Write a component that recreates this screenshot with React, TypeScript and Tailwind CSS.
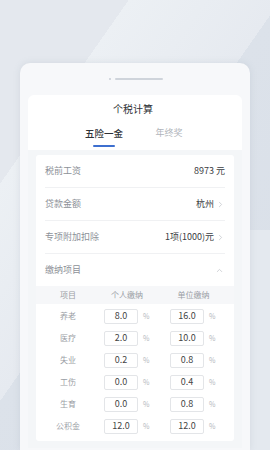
import { ChevronRight, ChevronUp } from "lucide-react";

const rows = [
  { name: "养老", personal: "8.0", company: "16.0" },
  { name: "医疗", personal: "2.0", company: "10.0" },
  { name: "失业", personal: "0.2", company: "0.8" },
  { name: "工伤", personal: "0.0", company: "0.4" },
  { name: "生育", personal: "0.0", company: "0.8" },
  { name: "公积金", personal: "12.0", company: "12.0" },
];

const RateBox = ({ value }: { value: string }) => (
  <div className="flex items-center gap-[5px]">
    <div className="flex h-[15px] w-[34px] items-center justify-center rounded-[2px] border border-[#e3e5e8] bg-white text-[9px] text-[#444]">
      {value}
    </div>
    <span className="text-[7px] text-[#b5b8bd]">%</span>
  </div>
);

export default function App() {
  return (
    <div
      className="relative h-[450px] w-[270px] overflow-hidden bg-[#dce2ea]"
      style={{ fontFamily: '"Noto Sans CJK SC", "Noto Sans", sans-serif' }}
    >
      {/* background light wedge */}
      <div className="pointer-events-none absolute inset-0 bg-[linear-gradient(125deg,#e4e8ee_0%,#e4e8ee_22%,#ecf0f4_22%,#e6eaf0_48%,#dce2ea_48%,#d9dfe8_100%)]" />
      <div className="pointer-events-none absolute right-0 top-[230px] h-[220px] w-[20px] bg-[#e4e9ef]" />

      <div className="relative mx-[20px] mt-[63px] h-[387px] rounded-t-[10px] bg-[#f7f8fa] px-[8px] shadow-[0_0_6px_rgba(160,170,185,0.25)]">
        {/* handle */}
        <div className="flex h-[32px] items-center justify-center gap-[4px] pl-[2px]">
          <div className="h-[2px] w-[2px] rounded-full bg-[#c9ced6]" />
          <div className="h-[2px] w-[48px] rounded-full bg-[#cfd4db]" />
        </div>

        <div className="rounded-t-[6px] bg-white">
          {/* header */}
          <div className="flex h-[55px] flex-col">
            <div className="pt-[6px] pr-[4px] text-center text-[10px] leading-[16px] text-[#2f3237]">个税计算</div>
            <div className="mt-[9px] flex">
              <div className="ml-[48px] flex w-[56px] flex-col items-center">
                <span className="text-[9.5px] font-medium leading-[14px] text-[#2f3237]">五险一金</span>
                <div className="mt-[5px] h-[2px] w-[22px] rounded-full bg-[#3d6fcf]" />
              </div>
              <div className="ml-[23px] w-[28px] text-center text-[9px] leading-[14px] text-[#b0b4ba]">年终奖</div>
            </div>
          </div>

          {/* gray body */}
          <div className="bg-[#f4f6f8] px-[8px] pt-[5px] pb-[7px]">
            <div className="rounded-[3px] bg-white pb-[4px]">
              <div className="mx-[9px] flex h-[33px] items-center justify-between border-b border-[#f0f1f3]">
                <span className="text-[9px] text-[#8d9198]">税前工资</span>
                <span className="text-[9px] text-[#3a3d42]">8973 元</span>
              </div>
              <div className="mx-[9px] flex h-[33px] items-center justify-between border-b border-[#f0f1f3]">
                <span className="text-[9px] text-[#8d9198]">贷款金额</span>
                <span className="flex items-center gap-[2px] text-[9px] text-[#3a3d42]">
                  杭州
                  <ChevronRight size={9} className="text-[#c3c6cb]" />
                </span>
              </div>
              <div className="mx-[9px] flex h-[33px] items-center justify-between border-b border-[#f0f1f3]">
                <span className="text-[9px] text-[#8d9198]">专项附加扣除</span>
                <span className="flex items-center gap-[2px] text-[9px] text-[#3a3d42]">
                  1项(1000)元
                  <ChevronRight size={9} className="text-[#c3c6cb]" />
                </span>
              </div>
              <div className="mx-[9px] flex h-[32px] items-center justify-between">
                <span className="text-[9px] text-[#8d9198]">缴纳项目</span>
                <ChevronUp size={9} className="mr-[1px] text-[#c3c6cb]" />
              </div>

              {/* table */}
              <div className="flex h-[18px] items-center bg-[#f6f7f9] text-[8px] text-[#9a9ea5]">
                <div className="w-[58px] pl-[6px] text-center">项目</div>
                <div className="w-[66px] text-center">个人缴纳</div>
                <div className="w-[66px] pl-[1px] text-center">单位缴纳</div>
              </div>
              <div className="pt-[1px]">
                {rows.map((r) => (
                  <div key={r.name} className="flex h-[22px] items-center">
                    <div className="w-[58px] pl-[6px] text-center text-[8px] text-[#9a9ea5]">{r.name}</div>
                    <div className="w-[66px] pl-[10px]">
                      <RateBox value={r.personal} />
                    </div>
                    <div className="w-[66px] pl-[10px]">
                      <RateBox value={r.company} />
                    </div>
                  </div>
                ))}
              </div>
            </div>
          </div>
        </div>
      </div>
    </div>
  );
}
